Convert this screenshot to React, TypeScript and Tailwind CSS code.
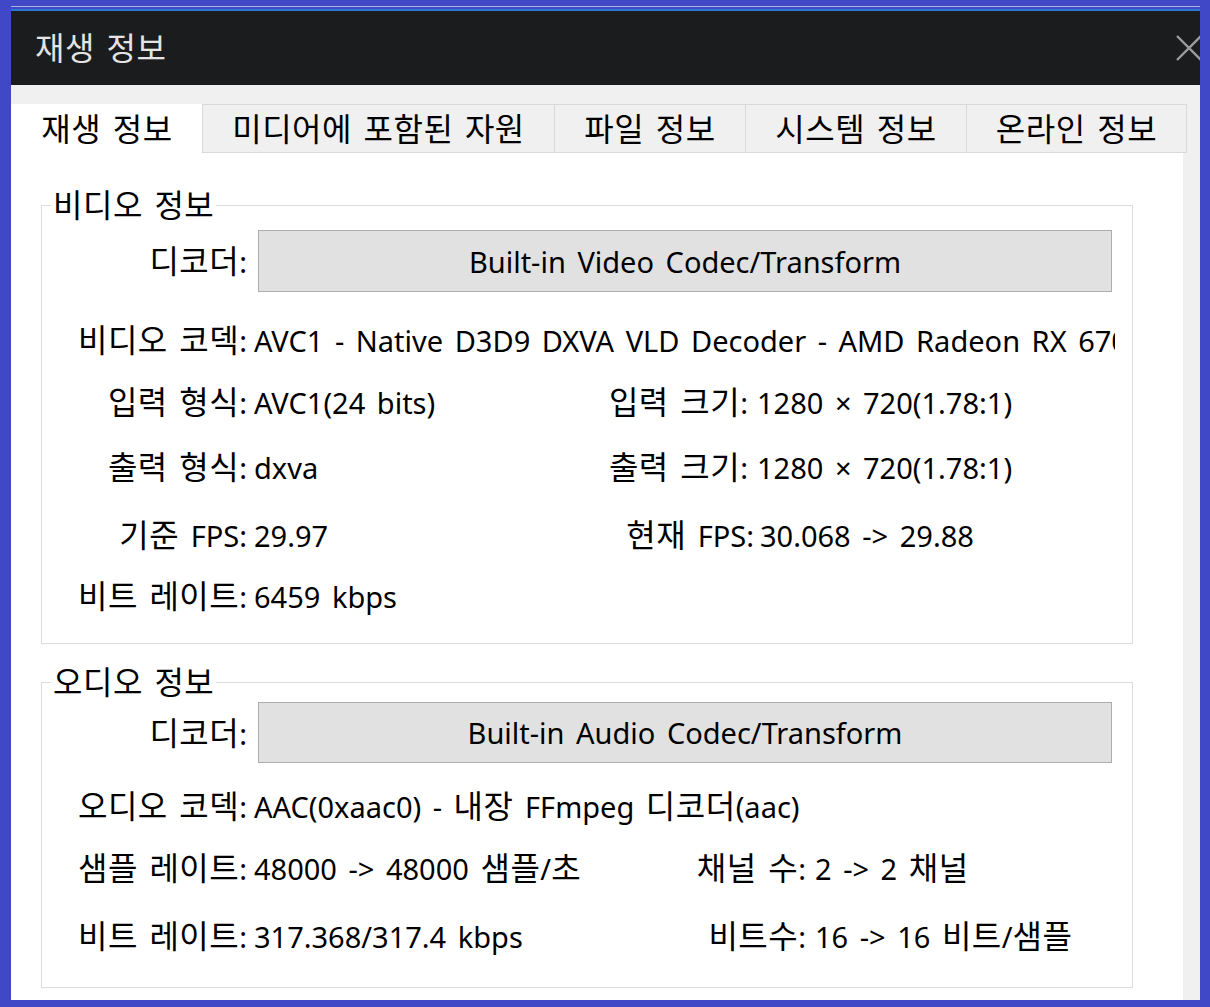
import React from 'react';

const font = "font-['Noto_Sans','Noto_Sans_CJK_KR',sans-serif]";

// 한글 부분만 조금 크게 (원본의 맑은 고딕 폭에 맞춤)
function K({ text }: { text: string }) {
    const parts = text.split(/([\uAC00-\uD7A3]+)/);
    return (
        <span>
            {parts.map((p, i) =>
                /[\uAC00-\uD7A3]/.test(p) ? (
                    <span key={i} className="text-[32px] tracking-[0.5px]">{p}</span>
                ) : (
                    p
                )
            )}
        </span>
    );
}

const tabs = [
    { label: '재생 정보', w: 'w-[192px]', active: true },
    { label: '미디어에 포함된 자원', w: 'w-[353px]' },
    { label: '파일 정보', w: 'w-[192px]' },
    { label: '시스템 정보', w: 'w-[222px]' },
    { label: '온라인 정보', w: 'w-[221px]' },
];

function DecoderRow({ text, className }: { text: string; className: string }) {
    return (
        <div className={`flex items-center ${className}`}>
            <div className="w-[205px] shrink-0 text-right"><K text="디코더:" /></div>
            <div className="ml-[11px] flex h-full w-[854px] items-center justify-center border border-[#adadad] bg-[#e1e1e1]">
                {text}
            </div>
        </div>
    );
}

function Field({ label, value, className = '' }: { label: string; value: string; className?: string }) {
    return (
        <div className={`flex items-center whitespace-nowrap ${className}`}>
            <div className="w-[205px] shrink-0 text-right"><K text={label} /></div>
            <div className="ml-[7px]"><K text={value} /></div>
        </div>
    );
}

// 두 칸짜리 행 (왼쪽 값 폭, 오른쪽 라벨 폭을 행마다 지정)
function PairRow({
    label, value, label2, value2, className, valueW, label2W, gap2 = 'ml-[9px]',
}: {
    label: string; value: string; label2: string; value2: string;
    className: string; valueW: string; label2W: string; gap2?: string;
}) {
    return (
        <div className={`flex items-center whitespace-nowrap ${className}`}>
            <div className="w-[205px] shrink-0 text-right"><K text={label} /></div>
            <div className={`ml-[7px] shrink-0 ${valueW}`}><K text={value} /></div>
            <div className={`shrink-0 text-right ${label2W}`}><K text={label2} /></div>
            <div className={gap2}><K text={value2} /></div>
        </div>
    );
}

export default function App() {
    return (
        <div className={`h-[1007px] w-[1210px] overflow-hidden bg-[#4048c8] pl-[11px] pr-[10px] pt-[6px] text-[29px] leading-none text-black [word-spacing:4px] ${font}`}>
            <div className="h-px bg-[#a9b3df]" />
            <div className="mt-[2px] flex h-[991px] flex-col bg-[#f0f0f0]">
                {/* 제목 표시줄 */}
                <div className="flex h-[76px] shrink-0 items-center overflow-hidden border-t-2 border-[#2a78cf] bg-[#1b1c1e]">
                    <span className="pl-[24px] text-[#e4e4e4]"><K text="재생 정보" /></span>
                    <svg className="ml-auto mr-[-3px] h-[28px] w-[28px]" viewBox="0 0 28 28" fill="none">
                        <path d="M2 2L26 26M26 2L2 26" stroke="#9c9c9c" strokeWidth="2.4" />
                    </svg>
                </div>

                {/* 탭 */}
                <div className="mt-[19px] flex h-[49px] shrink-0">
                    {tabs.map((t) =>
                        t.active ? (
                            <div key={t.label} className={`${t.w} flex items-center justify-center bg-white`}>
                                <K text={t.label} />
                            </div>
                        ) : (
                            <div key={t.label} className={`${t.w} -ml-px flex items-center justify-center border border-[#d9d9d9] bg-[#f0f0f0]`}>
                                <K text={t.label} />
                            </div>
                        )
                    )}
                </div>

                {/* 내용 */}
                <div className="flex w-[1172px] flex-1 flex-col bg-white pt-[52px]">
                    <div className="relative ml-[30px] h-[439px] w-[1092px] border border-[#dcdcdc]">
                        <div className="absolute -top-[21px] left-[9px] bg-white px-[2px] leading-[40px]"><K text="비디오 정보" /></div>
                        <div className="pt-[24px]">
                            <DecoderRow text="Built-in Video Codec/Transform" className="h-[62px]" />
                            <div className="mt-[17px] flex h-[62px] items-center whitespace-nowrap">
                                <div className="w-[205px] shrink-0 text-right"><K text="비디오 코덱:" /></div>
                                <div className="ml-[7px] w-[861px] overflow-hidden">
                                    AVC1 - Native D3D9 DXVA VLD Decoder - AMD Radeon RX 6700 XT
                                </div>
                            </div>
                            <PairRow label="입력 형식:" value="AVC1(24 bits)" label2="입력 크기:" value2="1280 × 720(1.78:1)"
                                className="h-[62px]" valueW="w-[306px]" label2W="w-[188px]" />
                            <PairRow label="출력 형식:" value="dxva" label2="출력 크기:" value2="1280 × 720(1.78:1)"
                                className="h-[68px]" valueW="w-[306px]" label2W="w-[188px]" />
                            <PairRow label="기준 FPS:" value="29.97" label2="현재 FPS:" value2="30.068 -> 29.88"
                                className="h-[68px]" valueW="w-[306px]" label2W="w-[194px]" gap2="ml-[6px]" />
                            <Field label="비트 레이트:" value="6459 kbps" className="h-[54px]" />
                        </div>
                    </div>

                    <div className="relative ml-[30px] mt-[38px] h-[306px] w-[1092px] border border-[#dcdcdc]">
                        <div className="absolute -top-[21px] left-[9px] bg-white px-[2px] leading-[40px]"><K text="오디오 정보" /></div>
                        <div className="pt-[19px]">
                            <DecoderRow text="Built-in Audio Codec/Transform" className="h-[61px]" />
                            <Field label="오디오 코덱:" value="AAC(0xaac0) - 내장 FFmpeg 디코더(aac)" className="mt-[12px] h-[62px]" />
                            <PairRow label="샘플 레이트:" value="48000 -> 48000 샘플/초" label2="채널 수:" value2="2 -> 2 채널"
                                className="h-[62px]" valueW="w-[346px]" label2W="w-[206px]" />
                            <PairRow label="비트 레이트:" value="317.368/317.4 kbps" label2="비트수:" value2="16 -> 16 비트/샘플"
                                className="mt-[6px] h-[62px]" valueW="w-[346px]" label2W="w-[206px]" />
                        </div>
                    </div>
                </div>
            </div>
        </div>
    );
}
